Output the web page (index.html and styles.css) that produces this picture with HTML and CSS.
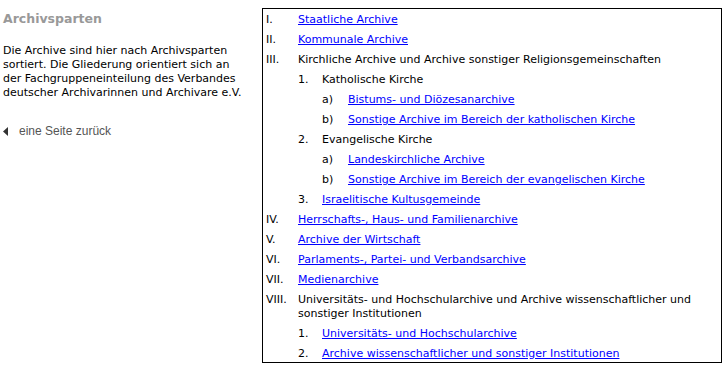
FILE: index.html
```html
<!DOCTYPE html>
<html lang="de">
<head>
  <meta charset="UTF-8" />
  <title>Archivsparten</title>
  <link rel="stylesheet" href="styles.css">
</head>
<body>
  <div class="page">
    <div class="side">
      <h1>Archivsparten</h1>
      <p class="intro">Die Archive sind hier nach Archivsparten sortiert. Die Gliederung orientiert sich an der Fachgruppeneinteilung des Verbandes deutscher Archivarinnen und Archivare e.V.</p>
      <a href="#" class="back-link">
        <svg width="6" height="9" viewBox="0 0 6 9"><path d="M0 4.5 L5 0 L5 9 Z" fill="#333"/></svg>
        eine Seite zurück
      </a>
    </div>

    <div class="box">
      <ol class="lvl1">
        <li><span class="num">I.</span><a href="#">Staatliche Archive</a></li>
        <li><span class="num">II.</span><a href="#">Kommunale Archive</a></li>
        <li><span class="num">III.</span><span>Kirchliche Archive und Archive sonstiger Religionsgemeinschaften</span>
          <ol class="lvl2">
            <li><span class="num">1.</span><span>Katholische Kirche</span>
              <ol class="lvl3">
                <li><span class="num">a)</span><a href="#">Bistums- und Diözesanarchive</a></li>
                <li><span class="num">b)</span><a href="#">Sonstige Archive im Bereich der katholischen Kirche</a></li>
              </ol>
            </li>
            <li><span class="num">2.</span><span>Evangelische Kirche</span>
              <ol class="lvl3">
                <li><span class="num">a)</span><a href="#">Landeskirchliche Archive</a></li>
                <li><span class="num">b)</span><a href="#">Sonstige Archive im Bereich der evangelischen Kirche</a></li>
              </ol>
            </li>
            <li><span class="num">3.</span><a href="#">Israelitische Kultusgemeinde</a></li>
          </ol>
        </li>
        <li><span class="num">IV.</span><a href="#">Herrschafts-, Haus- und Familienarchive</a></li>
        <li><span class="num">V.</span><a href="#">Archive der Wirtschaft</a></li>
        <li><span class="num">VI.</span><a href="#">Parlaments-, Partei- und Verbandsarchive</a></li>
        <li><span class="num">VII.</span><a href="#">Medienarchive</a></li>
        <li><span class="num">VIII.</span><span>Universitäts- und Hochschularchive und Archive wissenschaftlicher und sonstiger Institutionen</span>
          <ol class="lvl2">
            <li><span class="num">1.</span><a href="#">Universitäts- und Hochschularchive</a></li>
            <li><span class="num">2.</span><a href="#">Archive wissenschaftlicher und sonstiger Institutionen</a></li>
          </ol>
        </li>
      </ol>
    </div>
  </div>
</body>
</html>
```

FILE: styles.css
```css
body {
  margin: 0;
  background: #fff;
  color: #000;
  font-family: "DejaVu Sans", Verdana, sans-serif;
  font-size: 11px;
}
.page {
  display: flex;
  align-items: flex-start;
  padding-top: 8px;
}
.side {
  width: 259px;
  padding-left: 3px;
}
h1 {
  margin: 3px 0 0;
  font-size: 12.5px;
  font-weight: bold;
  color: #999;
}
.intro {
  margin: 18px 0 0;
  width: 245px;
  line-height: 14px;
}
.back-link {
  display: flex;
  align-items: center;
  gap: 10px;
  margin-top: 24px;
  color: #555;
  font-family: "Liberation Sans", Arial, sans-serif;
  font-size: 12px;
  text-decoration: none;
}
.box {
  width: 452px;
  height: 352px;
  border: 1px solid #000;
  padding: 1px 3px 0;
}
ol {
  list-style: none;
  margin: 0;
  padding: 0;
}
li {
  display: grid;
  grid-template-columns: 32px 1fr;
}
.lvl2 > li {
  grid-template-columns: 24px 1fr;
}
.lvl3 > li {
  grid-template-columns: 26px 1fr;
}
li > ol {
  grid-column: 2;
}
li > .num,
li > a,
li > span {
  line-height: 14px;
  padding: 3px 0;
}
a {
  color: #00f;
}
```
